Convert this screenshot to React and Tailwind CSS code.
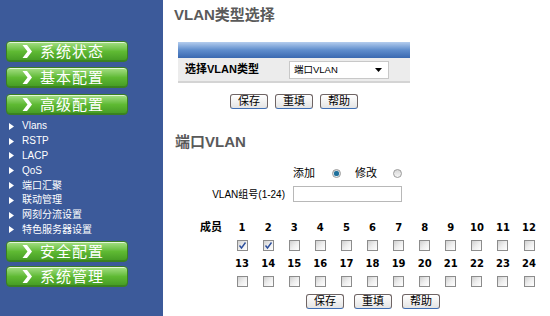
import React from "react";

const CJK = { fontFamily: '"Liberation Sans", "Noto Sans CJK SC", sans-serif' };
const NUM = { fontFamily: '"DejaVu Sans", "Noto Sans CJK SC", sans-serif' };

function NavBtn({ label, className = "" }) {
  return (
    <div
      className={`mx-[6px] h-[21px] w-[122px] rounded-[4px] border border-[#3a7f22] bg-gradient-to-b from-[#a6e084] via-[#5fba33] to-[#449a24] shadow-[inset_0_1px_0_rgba(255,255,255,0.7),inset_0_-1px_0_rgba(0,0,0,0.15)] flex items-center ${className}`}
    >
      <svg width="10" height="13" viewBox="0 0 10 13" className="ml-[15px] shrink-0">
        <path d="M0.5 0 L5 0 L10 6.5 L5 13 L0.5 13 L5.5 6.5 Z" fill="#ffffff" />
      </svg>
      <span className="ml-[8px] text-[15px] leading-[20px] text-white tracking-[1px]" style={CJK}>
        {label}
      </span>
    </div>
  );
}

function SubItem({ label }) {
  return (
    <div className="h-[14.8px] flex items-center pl-[9px]">
      <svg width="5" height="7" viewBox="0 0 5 7" className="shrink-0">
        <path d="M0 0 L5 3.5 L0 7 Z" fill="#ffffff" />
      </svg>
      <span className="ml-[8px] text-[10px] leading-[12px] text-white" style={CJK}>
        {label}
      </span>
    </div>
  );
}

function Btn({ children }) {
  return (
    <div
      className="w-[38px] h-[15px] rounded-[3px] border border-[#6e6464] border-b-[#3f6fb5] bg-gradient-to-b from-white to-[#e4e4e4] flex items-center justify-center text-[11px] leading-[13px] text-black"
      style={CJK}
    >
      {children}
    </div>
  );
}

function Check({ checked }) {
  return (
    <div className="w-[11px] h-[11px] border border-[#8c8c8c] bg-gradient-to-br from-[#d0d0d0] via-[#eeeeee] to-[#ffffff] flex items-center justify-center">
      {checked && (
        <svg width="9" height="9" viewBox="0 0 9 9">
          <path d="M1.5 4.5 L3.5 7 L7.5 1.5" stroke="#2d4f9c" strokeWidth="1.4" fill="none" />
        </svg>
      )}
    </div>
  );
}

function Radio({ checked }) {
  return (
    <div className="w-[9px] h-[9px] rounded-full border border-[#9a9a9a] bg-gradient-to-b from-[#d6d6d6] to-[#f6f6f6] flex items-center justify-center">
      {checked && <div className="w-[5px] h-[5px] rounded-full bg-[#1f6f9a] shadow-[0_0_1px_#4aa0c8]" />}
    </div>
  );
}

export default function App() {
  const row1 = [1, 2, 3, 4, 5, 6, 7, 8, 9, 10, 11, 12];
  const row2 = [13, 14, 15, 16, 17, 18, 19, 20, 21, 22, 23, 24];
  return (
    <div className="w-[550px] h-[316px] flex bg-white overflow-hidden">
      {/* Sidebar */}
      <div className="w-[163px] h-full bg-[#3c5a9a] flex flex-col">
        <NavBtn label="系统状态" className="mt-[41px]" />
        <NavBtn label="基本配置" className="mt-[5px]" />
        <NavBtn label="高级配置" className="mt-[6px]" />
        <div className="mt-[4px] flex flex-col">
          <SubItem label="Vlans" />
          <SubItem label="RSTP" />
          <SubItem label="LACP" />
          <SubItem label="QoS" />
          <SubItem label="端口汇聚" />
          <SubItem label="联动管理" />
          <SubItem label="网刻分流设置" />
          <SubItem label="特色服务器设置" />
        </div>
        <NavBtn label="安全配置" className="mt-[4px]" />
        <NavBtn label="系统管理" className="mt-[4px]" />
      </div>

      {/* Main */}
      <div className="flex-1 flex flex-col">
        <div className="mt-[7px] ml-[11px] h-[16px] text-[15px] leading-[16px] font-bold text-[#5a5a5a]" style={CJK}>
          VLAN类型选择
        </div>

        <div className="mt-[19px] ml-[15px] w-[232px] flex flex-col">
          <div className="h-[16px] bg-gradient-to-b from-[#b4cdee] via-[#5f8dcc] to-[#3a69b0]" />
          <div className="h-[25px] bg-[#ececec] border-b-2 border-[#d4d4d4] flex items-center">
            <span className="ml-[7px] w-[104px] text-[11px] font-bold text-black" style={CJK}>
              选择VLAN类型
            </span>
            <div className="w-[100px] h-[18px] bg-white border border-[#c8c8c8] flex items-center justify-between pl-[4px] pr-[6px]">
              <span className="text-[9.5px] leading-[10px] text-black" style={CJK}>
                端口VLAN
              </span>
              <svg width="7" height="4" viewBox="0 0 7 4">
                <path d="M0 0 L7 0 L3.5 4 Z" fill="#000" />
              </svg>
            </div>
          </div>
          <div className="mt-[11px] flex justify-center gap-[7px]">
            <Btn>保存</Btn>
            <Btn>重填</Btn>
            <Btn>帮助</Btn>
          </div>
        </div>

        <div className="mt-[25px] ml-[12px] h-[16px] text-[15px] leading-[16px] font-bold text-[#5a5a5a]" style={CJK}>
          端口VLAN
        </div>

        <div className="mt-[16px] ml-[130px] h-[14px] flex items-center text-[11px] text-black" style={CJK}>
          <span>添加</span>
          <div className="ml-[17px]"><Radio checked /></div>
          <span className="ml-[14px]">修改</span>
          <div className="ml-[16px]"><Radio /></div>
        </div>

        <div className="mt-[6px] h-[16px] flex items-center">
          <span className="w-[122px] text-right text-[10px] text-black" style={CJK}>
            VLAN组号(1-24)
          </span>
          <div className="ml-[8px] w-[109px] h-[16px] border border-[#b8b8b8] bg-white" />
        </div>

        <div className="mt-[16px] flex">
          <div className="w-[66px] h-[18px] flex items-center justify-end pr-[7px] text-[11px] font-bold text-black" style={CJK}>
            成员
          </div>
          <div className="grid grid-cols-[repeat(12,26.1px)]">
            {row1.map((n) => (
              <div key={n} className="h-[18px] flex items-center justify-center text-[10px] font-bold text-black" style={NUM}>
                {n}
              </div>
            ))}
            {row1.map((n) => (
              <div key={"c" + n} className="h-[18px] flex items-center justify-center">
                <Check checked={n <= 2} />
              </div>
            ))}
            {row2.map((n) => (
              <div key={n} className="h-[18px] flex items-center justify-center text-[10px] font-bold text-black" style={NUM}>
                {n}
              </div>
            ))}
            {row2.map((n) => (
              <div key={"c" + n} className="h-[18px] flex items-center justify-center">
                <Check />
              </div>
            ))}
          </div>
        </div>

        <div className="mt-[4px] ml-[143px] flex gap-[10px]">
          <Btn>保存</Btn>
          <Btn>重填</Btn>
          <Btn>帮助</Btn>
        </div>
      </div>
    </div>
  );
}
